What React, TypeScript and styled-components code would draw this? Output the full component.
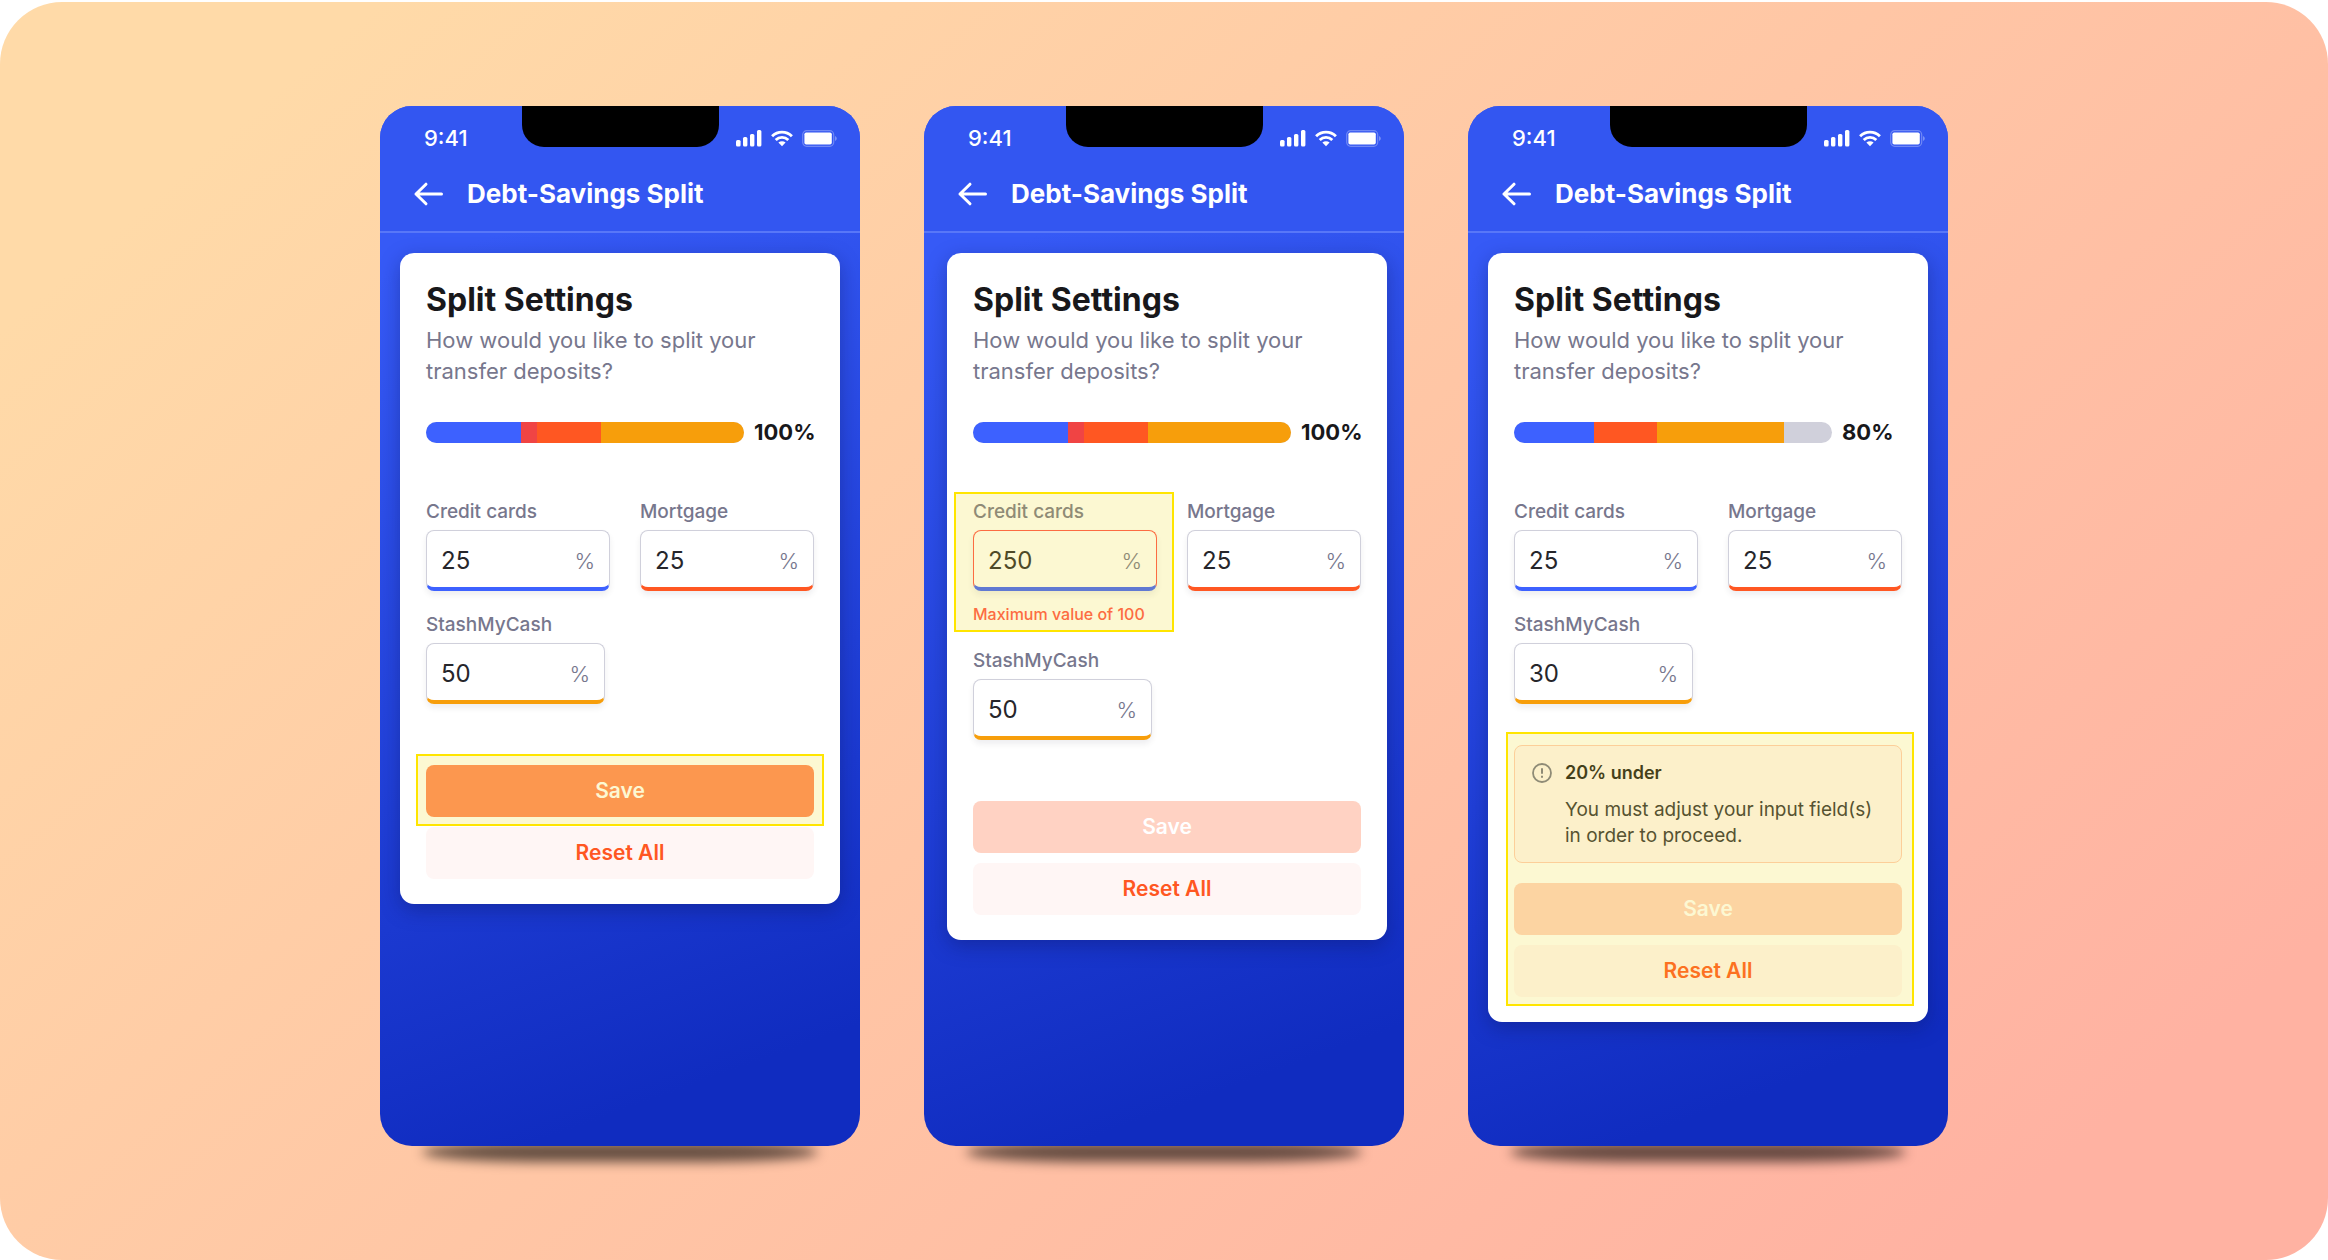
import React, { useId, useState } from "react";
import styled, { createGlobalStyle, css } from "styled-components";

const GlobalStyle = createGlobalStyle`
  *, *::before, *::after { box-sizing: border-box; }
  body {
    margin: 0;
    background: #ffffff;
    font-family: Inter, "Open Sans", sans-serif;
    color: #18181b;
  }
  h1, h2, h3, p { margin: 0; }
  button, input { font: inherit; }
`;

const Stage = styled.main`
  display: flex;
  flex-wrap: wrap;
  justify-content: center;
  align-items: flex-start;
  gap: 64px;
  min-height: calc(100vh - 2px);
  margin-top: 2px;
  padding: 104px 24px;
  border-radius: 62px;
  background: linear-gradient(139deg, #ffdaa8 10%, #ffb2a2 90%);
`;

const PhoneFrame = styled.section`
  position: relative;
  z-index: 0;
  flex: 0 1 480px;
  min-width: 0;
  &::after {
    content: "";
    position: absolute;
    z-index: -1;
    left: 42px;
    right: 42px;
    bottom: -16px;
    height: 20px;
    border-radius: 120px / 10px;
    background: rgba(0, 0, 0, 0.6);
    filter: blur(6px);
  }
`;

const Screen = styled.div`
  display: flex;
  flex-direction: column;
  min-height: 1040px;
  border-radius: 32px;
  overflow: hidden;
  background: linear-gradient(160deg, #365af6 14%, #1b39d0 68%, #102cc0 90%);
`;

const TopArea = styled.header`
  padding-bottom: 13px;
  border-bottom: 2px solid #5877f8;
  background: #3356f1;
`;

const StatusBar = styled.div`
  display: grid;
  grid-template-columns: 1fr 197px 1fr;
  height: 64px;
  color: #ffffff;
`;

const Clock = styled.span`
  align-self: center;
  padding-left: 44px;
  font-size: 22px;
  line-height: 24px;
  font-weight: 500;
`;

const Notch = styled.span`
  height: 41px;
  border-radius: 0 0 22px 22px;
  background: #000000;
`;

const StatusIcons = styled.span`
  display: flex;
  align-items: center;
  justify-content: flex-end;
  gap: 9px;
  padding-right: 23px;
`;

const TitleBar = styled.div`
  display: flex;
  align-items: center;
  gap: 22px;
  height: 48px;
  padding: 0 33px;
`;

const BackButton = styled.button`
  display: flex;
  padding: 0;
  border: 0;
  background: none;
  color: #ffffff;
  cursor: pointer;
`;

const ScreenTitle = styled.h1`
  font-size: 26px;
  line-height: 32px;
  font-weight: 700;
  color: #ffffff;
`;

const Card = styled.form<{ $shifted?: boolean }>`
  margin: ${(p) => (p.$shifted ? "20px 17px 20px 23px" : "20px")};
  padding: 26px 26px 25px;
  border-radius: 14px;
  background: #ffffff;
  box-shadow: 0 6px 20px rgba(10, 20, 90, 0.36);
`;

const CardTitle = styled.h2`
  font-size: 32px;
  line-height: 42px;
  font-weight: 700;
`;

const Intro = styled.p`
  margin-top: 4px;
  font-size: 22px;
  line-height: 31px;
  color: #77778d;
`;

const Meter = styled.div`
  display: flex;
  align-items: center;
  gap: 10px;
  margin-top: 35px;
`;

const Track = styled.div`
  display: flex;
  flex: 1;
  height: 21px;
  border-radius: 11px;
  overflow: hidden;
  background: #d0d0db;
`;

const Segment = styled.span<{ $color: string }>`
  background: ${(p) => p.$color};
`;

const Total = styled.strong`
  width: 60px;
  font-size: 22px;
  line-height: 21px;
  font-weight: 700;
  white-space: nowrap;
`;

const Fields = styled.div`
  display: flex;
  flex-direction: column;
  gap: 22px;
  margin-top: 57px;
`;

const FieldRow = styled.div`
  display: flex;
  align-items: flex-start;
  gap: 30px;
`;

const highlighted = css<{ $mark?: string }>`
  ${(p) =>
    p.$mark &&
    css`
      position: relative;
      &::after {
        content: "";
        position: absolute;
        inset: ${p.$mark};
        border: 2px solid #ffe500;
        background: rgba(238, 218, 32, 0.2);
        pointer-events: none;
      }
    `}
`;

const FieldBox = styled.div<{ $width: number; $mark?: string }>`
  flex: 0 1 ${(p) => p.$width}px;
  min-width: 0;
  ${highlighted}
`;

const Label = styled.label`
  display: block;
  margin-bottom: 6px;
  font-size: 19px;
  line-height: 24px;
  font-weight: 500;
  color: #77778d;
`;

const InputShell = styled.div<{ $accent: string; $invalid?: boolean }>`
  display: flex;
  align-items: center;
  height: 61px;
  padding: 3px 14px 0;
  border: 1px solid ${(p) => (p.$invalid ? "#ff504b" : "#d0d0db")};
  border-bottom: 4px solid ${(p) => p.$accent};
  border-radius: 8px;
  background: #ffffff;
  box-shadow: 0 4px 6px rgba(20, 20, 40, 0.07);
`;

const NumberInput = styled.input`
  flex: 1;
  width: 0;
  min-width: 0;
  padding: 0;
  border: 0;
  outline: 0;
  background: none;
  font-size: 24px;
  line-height: 32px;
  color: #26262b;
`;

const Unit = styled.span`
  font-size: 22px;
  line-height: 32px;
  font-weight: 300;
  color: #77778d;
`;

const FieldError = styled.p`
  margin-top: 11px;
  margin-bottom: 1px;
  font-size: 16px;
  line-height: 24px;
  font-weight: 500;
  color: #ff504b;
  white-space: nowrap;
`;

const Footer = styled.div<{ $roomy: boolean; $mark?: string }>`
  margin-top: ${(p) => (p.$roomy ? 61 : 41)}px;
  ${highlighted}
`;

const Notice = styled.div`
  display: flex;
  gap: 13px;
  margin-bottom: 20px;
  padding: 15px 17px 13px;
  border: 1px solid #ffccb8;
  border-radius: 8px;
  background: #fff6f5;
`;

const NoticeIcon = styled.span`
  display: flex;
  flex: none;
  align-items: center;
  height: 24px;
`;

const NoticeTitle = styled.h3`
  font-size: 18px;
  line-height: 24px;
  font-weight: 600;
`;

const NoticeText = styled.p`
  margin-top: 12px;
  font-size: 19px;
  line-height: 26px;
  color: #303036;
`;

const Buttons = styled.div`
  display: flex;
  flex-direction: column;
  gap: 10px;
`;

const ButtonSlot = styled.div<{ $mark?: string }>`
  display: flex;
  ${highlighted}
`;

const Button = styled.button<{ $tone: "ready" | "off" | "soft" }>`
  flex: 1;
  height: 52px;
  padding: 0;
  border: 0;
  border-radius: 8px;
  font-size: 21px;
  line-height: 24px;
  font-weight: 600;
  color: ${(p) => (p.$tone === "soft" ? "#ff5722" : "#ffffff")};
  background: ${(p) => ({ ready: "#ff865c", off: "#ffd2c3", soft: "#fff6f5" })[p.$tone]};
  cursor: ${(p) => (p.$tone === "off" ? "default" : "pointer")};
`;

const SignalIcon = () => (
  <svg width="26" height="17" viewBox="0 0 26 17" fill="currentColor" aria-hidden="true">
    <rect x="0" y="10" width="4.600" height="6.500" rx="1.500" />
    <rect x="7" y="7" width="4.400" height="9.500" rx="1.500" />
    <rect x="14" y="4" width="4.400" height="12.500" rx="1.500" />
    <rect x="21" y="0" width="4.400" height="16.500" rx="1.500" />
  </svg>
);

const WifiIcon = () => (
  <svg width="22" height="17" viewBox="0 0 22 17" aria-hidden="true">
    <g fill="none" stroke="currentColor" strokeWidth="2.9">
      <path d="M1.100 6.200C6.700.800 15.300.800 20.900 6.200" />
      <path d="M4.700 10c3.600-3.500 9-3.500 12.600 0" />
    </g>
    <path d="M7.400 12.600c2.100-1.800 5.100-1.800 7.200 0L11 16.300z" fill="currentColor" />
  </svg>
);

const BatteryIcon = () => (
  <svg width="35" height="17" viewBox="0 0 35 17" aria-hidden="true">
    <rect x=".7" y=".7" width="31" height="15.600" rx="4" fill="none" stroke="currentColor" strokeOpacity=".3" strokeWidth="1.200" />
    <rect x="2.400" y="2.400" width="27.400" height="12.200" rx="1.800" fill="currentColor" />
    <path d="M33 6v5c1-.4 1.800-1.400 1.800-2.500S34 6.400 33 6z" fill="currentColor" fillOpacity=".35" />
  </svg>
);

const ArrowIcon = () => (
  <svg width="32" height="24" viewBox="0 0 32 24" fill="none" stroke="currentColor" strokeWidth="3" strokeLinecap="round" strokeLinejoin="round" aria-hidden="true">
    <path d="M28.500 12H3M13 2.200L3 12l10 9.800" />
  </svg>
);

const AlertIcon = () => (
  <svg width="20" height="20" viewBox="0 0 20 20" fill="none" stroke="#77778d" strokeWidth="1.800" aria-hidden="true">
    <circle cx="10" cy="10" r="9" />
    <path d="M10 5.200v5.600M10 12.800v1.900" strokeWidth="2" />
  </svg>
);

const BLUE = "#3d61ff";
const RED = "#f04444";
const ORANGE = "#ff5722";
const AMBER = "#f79e0b";

type Slice = [color: string, percent: number];

const FULL_SPLIT: Slice[] = [[BLUE, 30], [RED, 5], [ORANGE, 20], [AMBER, 45]];
const UNDER_SPLIT: Slice[] = [[BLUE, 25], [ORANGE, 20], [AMBER, 40]];

interface FieldProps {
  label: string;
  initial: string;
  accent: string;
  width: number;
  error?: string;
  mark?: string;
}

function PercentField({ label, initial, accent, width, error, mark }: FieldProps) {
  const id = useId();
  const [value, setValue] = useState(initial);
  return (
    <FieldBox $width={width} $mark={mark}>
      <Label htmlFor={id}>{label}</Label>
      <InputShell $accent={accent} $invalid={Boolean(error)}>
        <NumberInput
          id={id}
          type="text"
          inputMode="numeric"
          value={value}
          aria-invalid={Boolean(error)}
          onChange={(e) => setValue(e.target.value)}
        />
        <Unit>%</Unit>
      </InputShell>
      {error && <FieldError>{error}</FieldError>}
    </FieldBox>
  );
}

interface PhoneProps {
  slices: Slice[];
  total: string;
  credit: string;
  stash: string;
  shifted?: boolean;
  creditError?: string;
  canSave?: boolean;
  notice?: { title: string; text: string };
}

function Phone({ slices, total, credit, stash, shifted, creditError, canSave, notice }: PhoneProps) {
  return (
    <PhoneFrame>
      <Screen>
        <TopArea>
          <StatusBar>
            <Clock>9:41</Clock>
            <Notch />
            <StatusIcons>
              <SignalIcon />
              <WifiIcon />
              <BatteryIcon />
            </StatusIcons>
          </StatusBar>
          <TitleBar>
            <BackButton type="button" aria-label="Back">
              <ArrowIcon />
            </BackButton>
            <ScreenTitle>Debt-Savings Split</ScreenTitle>
          </TitleBar>
        </TopArea>
        <Card $shifted={shifted} onSubmit={(e) => e.preventDefault()}>
          <CardTitle>Split Settings</CardTitle>
          <Intro>How would you like to split your transfer deposits?</Intro>
          <Meter>
            <Track>
              {slices.map(([color, percent]) => (
                <Segment key={color} $color={color} style={{ width: `${percent}%` }} />
              ))}
            </Track>
            <Total>{total}</Total>
          </Meter>
          <Fields>
            <FieldRow>
              <PercentField
                label="Credit cards"
                initial={credit}
                accent={BLUE}
                width={184}
                error={creditError}
                mark={creditError && "-8px -17px -5px -19px"}
              />
              <PercentField label="Mortgage" initial="25" accent={ORANGE} width={174} />
            </FieldRow>
            <FieldRow>
              <PercentField label="StashMyCash" initial={stash} accent={AMBER} width={179} />
            </FieldRow>
          </Fields>
          <Footer $roomy={!notice} $mark={notice && "-13px -12px -9px -8px"}>
            {notice && (
              <Notice role="alert">
                <NoticeIcon>
                  <AlertIcon />
                </NoticeIcon>
                <div>
                  <NoticeTitle>{notice.title}</NoticeTitle>
                  <NoticeText>{notice.text}</NoticeText>
                </div>
              </Notice>
            )}
            <Buttons>
              <ButtonSlot $mark={canSave ? "-11px -10px -9px" : undefined}>
                <Button type="submit" $tone={canSave ? "ready" : "off"} disabled={!canSave}>
                  Save
                </Button>
              </ButtonSlot>
              <ButtonSlot>
                <Button type="button" $tone="soft">
                  Reset All
                </Button>
              </ButtonSlot>
            </Buttons>
          </Footer>
        </Card>
      </Screen>
    </PhoneFrame>
  );
}

export default function App() {
  return (
    <>
      <GlobalStyle />
      <Stage>
        <Phone slices={FULL_SPLIT} total="100%" credit="25" stash="50" canSave />
        <Phone
          slices={FULL_SPLIT}
          total="100%"
          credit="250"
          stash="50"
          shifted
          creditError="Maximum value of 100"
        />
        <Phone
          slices={UNDER_SPLIT}
          total="80%"
          credit="25"
          stash="30"
          notice={{
            title: "20% under",
            text: "You must adjust your input field(s) in order to proceed.",
          }}
        />
      </Stage>
    </>
  );
}
